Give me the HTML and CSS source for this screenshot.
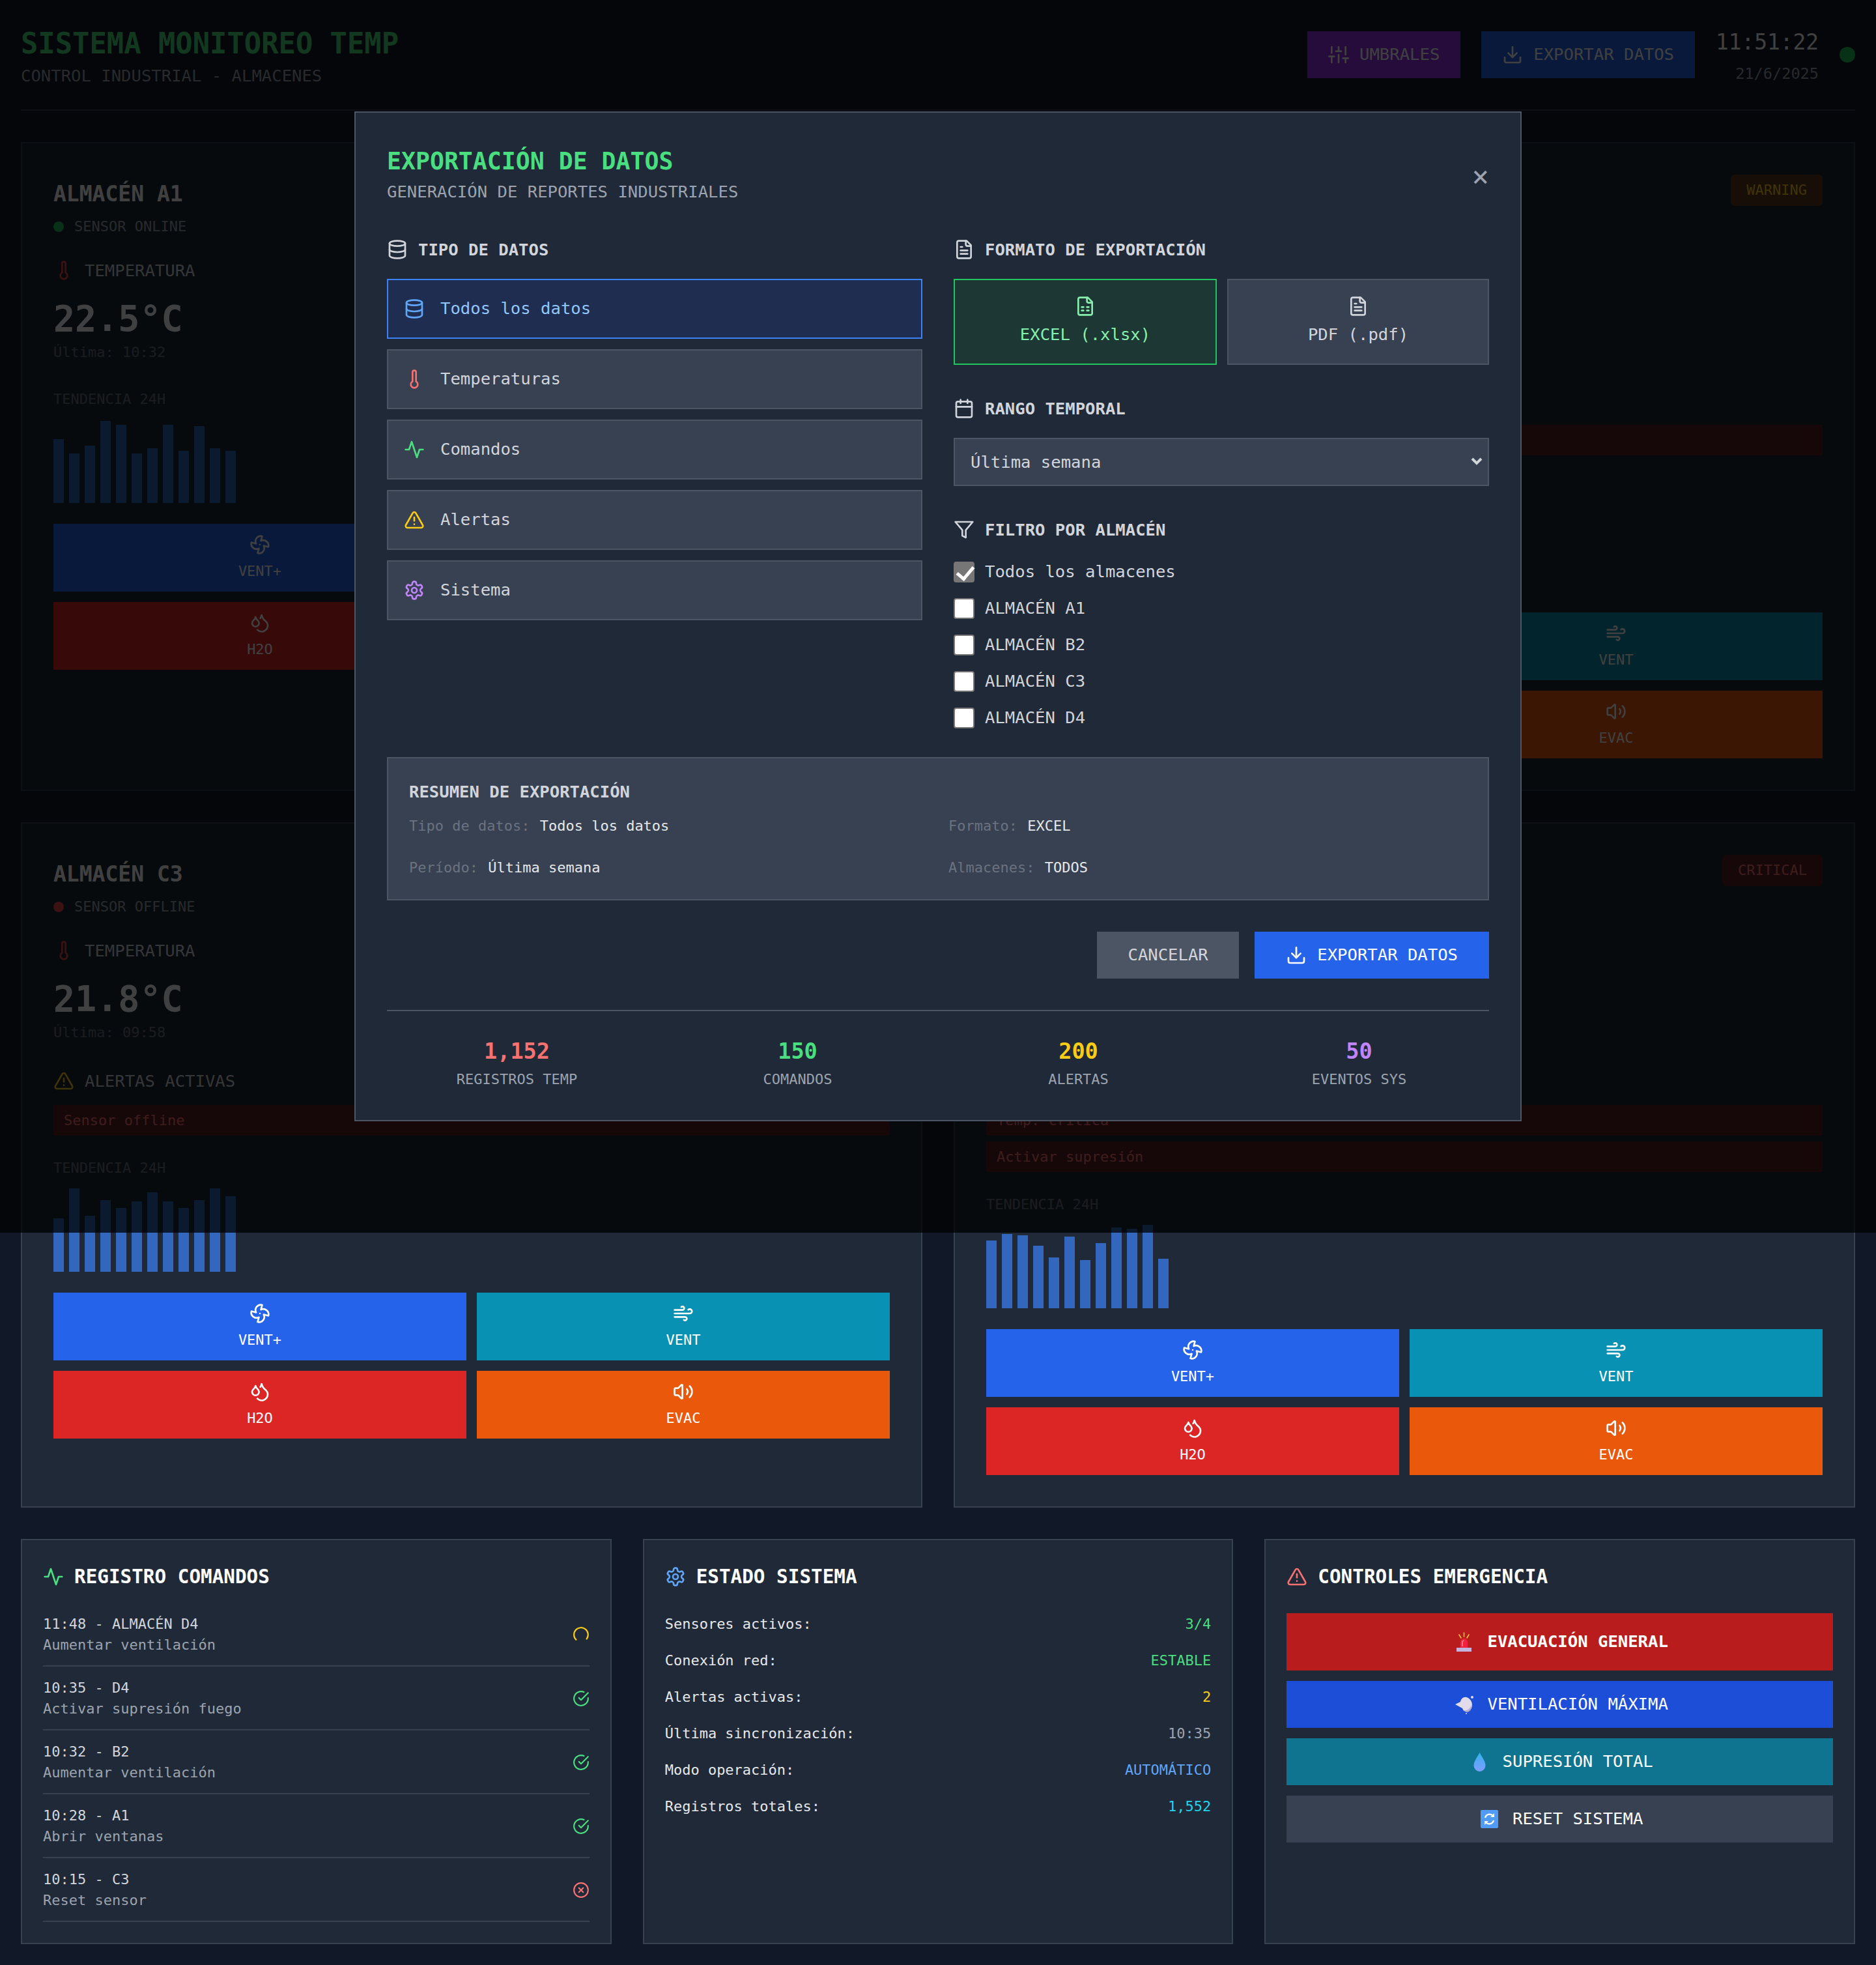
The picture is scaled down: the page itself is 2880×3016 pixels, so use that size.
FILE: index.html
```
<!DOCTYPE html>
<html lang="es">
<head>
    <meta charset="utf-8">
    <title>Sistema Monitoreo Temp</title>
    <link rel="stylesheet" href="styles.css">
</head>
<body>
    <svg class="sprite" width="0" height="0">
        <symbol id="i-db" viewBox="0 0 24 24"><ellipse cx="12" cy="5" rx="9" ry="3"/><path d="M3 5V19A9 3 0 0 0 21 19V5"/><path d="M3 12A9 3 0 0 0 21 12"/></symbol>
        <symbol id="i-temp" viewBox="0 0 24 24"><path d="M14 4v10.54a4 4 0 1 1-4 0V4a2 2 0 0 1 4 0Z"/></symbol>
        <symbol id="i-act" viewBox="0 0 24 24"><path d="M22 12h-4l-3 9L9 3l-3 9H2"/></symbol>
        <symbol id="i-warn" viewBox="0 0 24 24"><path d="m21.73 18-8-14a2 2 0 0 0-3.48 0l-8 14A2 2 0 0 0 4 21h16a2 2 0 0 0 1.73-3"/><path d="M12 9v4"/><path d="M12 17h.01"/></symbol>
        <symbol id="i-gear" viewBox="0 0 24 24"><path d="M12.22 2h-.44a2 2 0 0 0-2 2v.18a2 2 0 0 1-1 1.73l-.43.25a2 2 0 0 1-2 0l-.15-.08a2 2 0 0 0-2.73.73l-.22.38a2 2 0 0 0 .73 2.73l.15.1a2 2 0 0 1 1 1.72v.51a2 2 0 0 1-1 1.74l-.15.09a2 2 0 0 0-.73 2.73l.22.38a2 2 0 0 0 2.73.73l.15-.08a2 2 0 0 1 2 0l.43.25a2 2 0 0 1 1 1.73V20a2 2 0 0 0 2 2h.44a2 2 0 0 0 2-2v-.18a2 2 0 0 1 1-1.73l.43-.25a2 2 0 0 1 2 0l.15.08a2 2 0 0 0 2.73-.73l.22-.39a2 2 0 0 0-.73-2.73l-.15-.08a2 2 0 0 1-1-1.74v-.5a2 2 0 0 1 1-1.74l.15-.09a2 2 0 0 0 .73-2.73l-.22-.38a2 2 0 0 0-2.73-.73l-.15.08a2 2 0 0 1-2 0l-.43-.25a2 2 0 0 1-1-1.73V4a2 2 0 0 0-2-2z"/><circle cx="12" cy="12" r="3"/></symbol>
        <symbol id="i-file" viewBox="0 0 24 24"><path d="M15 2H6a2 2 0 0 0-2 2v16a2 2 0 0 0 2 2h12a2 2 0 0 0 2-2V7Z"/><path d="M14 2v4a2 2 0 0 0 2 2h4"/><path d="M10 9H8"/><path d="M16 13H8"/><path d="M16 17H8"/></symbol>
        <symbol id="i-sheet" viewBox="0 0 24 24"><path d="M15 2H6a2 2 0 0 0-2 2v16a2 2 0 0 0 2 2h12a2 2 0 0 0 2-2V7Z"/><path d="M14 2v4a2 2 0 0 0 2 2h4"/><path d="M8 13h2"/><path d="M14 13h2"/><path d="M8 17h2"/><path d="M14 17h2"/></symbol>
        <symbol id="i-cal" viewBox="0 0 24 24"><path d="M8 2v4"/><path d="M16 2v4"/><rect x="3" y="4" width="18" height="18" rx="2"/><path d="M3 10h18"/></symbol>
        <symbol id="i-filter" viewBox="0 0 24 24"><polygon points="22 3 2 3 10 12.46 10 19 14 21 14 12.46 22 3"/></symbol>
        <symbol id="i-down" viewBox="0 0 24 24"><path d="M21 15v4a2 2 0 0 1-2 2H5a2 2 0 0 1-2-2v-4"/><polyline points="7 10 12 15 17 10"/><line x1="12" y1="15" x2="12" y2="3"/></symbol>
        <symbol id="i-sliders" viewBox="0 0 24 24"><line x1="4" y1="21" x2="4" y2="14"/><line x1="4" y1="10" x2="4" y2="3"/><line x1="12" y1="21" x2="12" y2="12"/><line x1="12" y1="8" x2="12" y2="3"/><line x1="20" y1="21" x2="20" y2="16"/><line x1="20" y1="12" x2="20" y2="3"/><line x1="1" y1="14" x2="7" y2="14"/><line x1="9" y1="8" x2="15" y2="8"/><line x1="17" y1="16" x2="23" y2="16"/></symbol>
        <symbol id="i-fan" viewBox="0 0 24 24"><path d="M10.827 16.379a6.082 6.082 0 0 1-8.618-7.002l5.412 1.45a6.082 6.082 0 0 1 7.002-8.618l-1.45 5.412a6.082 6.082 0 0 1 8.618 7.002l-5.412-1.45a6.082 6.082 0 0 1-7.002 8.618l1.45-5.412Z"/><path d="M12 12v.01"/></symbol>
        <symbol id="i-wind" viewBox="0 0 24 24"><path d="M17.7 7.7a2.5 2.5 0 1 1 1.8 4.3H2"/><path d="M9.6 4.6A2 2 0 1 1 11 8H2"/><path d="M12.6 19.4A2 2 0 1 0 14 16H2"/></symbol>
        <symbol id="i-drops" viewBox="0 0 24 24"><path d="M7 16.3c2.2 0 4-1.83 4-4.05 0-1.16-.57-2.26-1.71-3.19S7.29 6.75 7 5.3c-.29 1.45-1.14 2.84-2.29 3.76S3 11.1 3 12.25c0 2.22 1.8 4.05 4 4.05z"/><path d="M12.56 6.6A10.97 10.97 0 0 0 14 3.02c.5 2.5 2 4.9 4 6.5s3 3.5 3 5.5a6.98 6.98 0 0 1-11.91 4.97"/></symbol>
        <symbol id="i-vol" viewBox="0 0 24 24"><path d="M11 4.702a.705.705 0 0 0-1.203-.498L6.413 7.587A1.4 1.4 0 0 1 5.416 8H3a1 1 0 0 0-1 1v6a1 1 0 0 0 1 1h2.416a1.4 1.4 0 0 1 .997.413l3.383 3.384A.705.705 0 0 0 11 19.298z"/><path d="M16 9a5 5 0 0 1 0 6"/><path d="M19.364 18.364a9 9 0 0 0 0-12.728"/></symbol>
        <symbol id="i-ok" viewBox="0 0 24 24"><path d="M22 11.08V12a10 10 0 1 1-5.93-9.14"/><polyline points="22 4 12 14.01 9 11.01"/></symbol>
        <symbol id="i-bad" viewBox="0 0 24 24"><circle cx="12" cy="12" r="10"/><line x1="15" y1="9" x2="9" y2="15"/><line x1="9" y1="9" x2="15" y2="15"/></symbol>
        <symbol id="i-load" viewBox="0 0 24 24"><path d="M5 19.2A10 10 0 1 1 20 18"/></symbol>
    </svg>

    <header class="top">
        <div>
            <h1 class="top-title">SISTEMA MONITOREO TEMP</h1>
            <p class="top-sub">CONTROL INDUSTRIAL - ALMACENES</p>
        </div>
        <div class="top-right">
            <button class="btn btn-purple"><svg class="icon"><use href="#i-sliders"/></svg>UMBRALES</button>
            <button class="btn btn-blue"><svg class="icon"><use href="#i-down"/></svg>EXPORTAR DATOS</button>
            <div class="clock">
                <div class="clock-time">11:51:22</div>
                <div class="clock-date">21/6/2025</div>
            </div>
            <span class="live-dot"></span>
        </div>
    </header>

    <main class="cards">
        <section class="card">
            <div class="card-head">
                <div>
                    <h2 class="card-title">ALMACÉN A1</h2>
                    <div class="sensor"><span class="dot dot-on"></span>SENSOR ONLINE</div>
                </div>
                <span class="badge badge-ok">NORMAL</span>
            </div>
            <div class="temp-label"><svg class="icon red-dark"><use href="#i-temp"/></svg>TEMPERATURA</div>
            <div class="temp-value">22.5°C</div>
            <div class="temp-time">Última: 10:32</div>
            <div class="trend">TENDENCIA 24H</div>
            <div class="bars">
                <span style="height:98px"></span><span style="height:76px"></span><span style="height:88px"></span><span style="height:126px"></span><span style="height:120px"></span><span style="height:76px"></span><span style="height:84px"></span><span style="height:120px"></span><span style="height:80px"></span><span style="height:118px"></span><span style="height:84px"></span><span style="height:80px"></span>
            </div>
            <div class="actions">
                <button class="act act-blue"><svg class="icon"><use href="#i-fan"/></svg>VENT+</button>
                <button class="act act-cyan"><svg class="icon"><use href="#i-wind"/></svg>VENT</button>
                <button class="act act-red"><svg class="icon"><use href="#i-drops"/></svg>H2O</button>
                <button class="act act-orange"><svg class="icon"><use href="#i-vol"/></svg>EVAC</button>
            </div>
        </section>

        <section class="card">
            <div class="card-head">
                <div>
                    <h2 class="card-title">ALMACÉN B2</h2>
                    <div class="sensor"><span class="dot dot-on"></span>SENSOR ONLINE</div>
                </div>
                <span class="badge badge-warn">WARNING</span>
            </div>
            <div class="temp-label"><svg class="icon red-dark"><use href="#i-temp"/></svg>TEMPERATURA</div>
            <div class="temp-value">26.3°C</div>
            <div class="temp-time">Última: 10:33</div>
            <div class="alerts">
                <div class="alerts-head"><svg class="icon yellow"><use href="#i-warn"/></svg>ALERTAS ACTIVAS</div>
                <div class="alert-row">Temp: elevada</div>
            </div>
            <div class="trend">TENDENCIA 24H</div>
            <div class="bars">
                <span style="height:90px"></span><span style="height:100px"></span><span style="height:86px"></span><span style="height:110px"></span><span style="height:96px"></span><span style="height:104px"></span><span style="height:84px"></span><span style="height:118px"></span><span style="height:92px"></span><span style="height:100px"></span><span style="height:80px"></span><span style="height:106px"></span>
            </div>
            <div class="actions">
                <button class="act act-blue"><svg class="icon"><use href="#i-fan"/></svg>VENT+</button>
                <button class="act act-cyan"><svg class="icon"><use href="#i-wind"/></svg>VENT</button>
                <button class="act act-red"><svg class="icon"><use href="#i-drops"/></svg>H2O</button>
                <button class="act act-orange"><svg class="icon"><use href="#i-vol"/></svg>EVAC</button>
            </div>
        </section>

        <section class="card">
            <div class="card-head">
                <div>
                    <h2 class="card-title">ALMACÉN C3</h2>
                    <div class="sensor"><span class="dot dot-off"></span>SENSOR OFFLINE</div>
                </div>
                <span class="badge badge-crit">OFFLINE</span>
            </div>
            <div class="temp-label"><svg class="icon red-dark"><use href="#i-temp"/></svg>TEMPERATURA</div>
            <div class="temp-value">21.8°C</div>
            <div class="temp-time">Última: 09:58</div>
            <div class="alerts">
                <div class="alerts-head"><svg class="icon yellow"><use href="#i-warn"/></svg>ALERTAS ACTIVAS</div>
                <div class="alert-row">Sensor offline</div>
            </div>
            <div class="trend">TENDENCIA 24H</div>
            <div class="bars">
                <span style="height:82px"></span><span style="height:128px"></span><span style="height:86px"></span><span style="height:110px"></span><span style="height:98px"></span><span style="height:108px"></span><span style="height:122px"></span><span style="height:108px"></span><span style="height:98px"></span><span style="height:110px"></span><span style="height:128px"></span><span style="height:116px"></span>
            </div>
            <div class="actions">
                <button class="act act-blue"><svg class="icon"><use href="#i-fan"/></svg>VENT+</button>
                <button class="act act-cyan"><svg class="icon"><use href="#i-wind"/></svg>VENT</button>
                <button class="act act-red"><svg class="icon"><use href="#i-drops"/></svg>H2O</button>
                <button class="act act-orange"><svg class="icon"><use href="#i-vol"/></svg>EVAC</button>
            </div>
        </section>

        <section class="card">
            <div class="card-head">
                <div>
                    <h2 class="card-title">ALMACÉN D4</h2>
                    <div class="sensor"><span class="dot dot-on"></span>SENSOR ONLINE</div>
                </div>
                <span class="badge badge-crit">CRITICAL</span>
            </div>
            <div class="temp-label"><svg class="icon red-dark"><use href="#i-temp"/></svg>TEMPERATURA</div>
            <div class="temp-value">31.2°C</div>
            <div class="temp-time">Última: 10:35</div>
            <div class="alerts">
                <div class="alerts-head"><svg class="icon yellow"><use href="#i-warn"/></svg>ALERTAS ACTIVAS</div>
                <div class="alert-row">Temp: crítica</div>
                <div class="alert-row">Activar supresión</div>
            </div>
            <div class="trend">TENDENCIA 24H</div>
            <div class="bars">
                <span style="height:104px"></span><span style="height:114px"></span><span style="height:112px"></span><span style="height:96px"></span><span style="height:78px"></span><span style="height:110px"></span><span style="height:74px"></span><span style="height:100px"></span><span style="height:124px"></span><span style="height:122px"></span><span style="height:128px"></span><span style="height:76px"></span>
            </div>
            <div class="actions">
                <button class="act act-blue"><svg class="icon"><use href="#i-fan"/></svg>VENT+</button>
                <button class="act act-cyan"><svg class="icon"><use href="#i-wind"/></svg>VENT</button>
                <button class="act act-red"><svg class="icon"><use href="#i-drops"/></svg>H2O</button>
                <button class="act act-orange"><svg class="icon"><use href="#i-vol"/></svg>EVAC</button>
            </div>
        </section>
    </main>

    <div class="panels">
        <section class="panel">
            <h3 class="panel-title"><svg class="icon green"><use href="#i-act"/></svg>REGISTRO COMANDOS</h3>
            <div class="log-row">
                <div><div class="log-time">11:48 - ALMACÉN D4</div><div class="log-text">Aumentar ventilación</div></div>
                <svg class="log-icon yellow"><use href="#i-load"/></svg>
            </div>
            <div class="log-row">
                <div><div class="log-time">10:35 - D4</div><div class="log-text">Activar supresión fuego</div></div>
                <svg class="log-icon green"><use href="#i-ok"/></svg>
            </div>
            <div class="log-row">
                <div><div class="log-time">10:32 - B2</div><div class="log-text">Aumentar ventilación</div></div>
                <svg class="log-icon green"><use href="#i-ok"/></svg>
            </div>
            <div class="log-row">
                <div><div class="log-time">10:28 - A1</div><div class="log-text">Abrir ventanas</div></div>
                <svg class="log-icon green"><use href="#i-ok"/></svg>
            </div>
            <div class="log-row">
                <div><div class="log-time">10:15 - C3</div><div class="log-text">Reset sensor</div></div>
                <svg class="log-icon red"><use href="#i-bad"/></svg>
            </div>
        </section>

        <section class="panel">
            <h3 class="panel-title panel-title-stats"><svg class="icon blue"><use href="#i-gear"/></svg>ESTADO SISTEMA</h3>
            <div class="stat-list">
                <div class="stat-row"><span>Sensores activos:</span><span class="green">3/4</span></div>
                <div class="stat-row"><span>Conexión red:</span><span class="green">ESTABLE</span></div>
                <div class="stat-row"><span>Alertas activas:</span><span class="yellow">2</span></div>
                <div class="stat-row"><span>Última sincronización:</span><span class="gray">10:35</span></div>
                <div class="stat-row"><span>Modo operación:</span><span class="blue">AUTOMÁTICO</span></div>
                <div class="stat-row"><span>Registros totales:</span><span class="cyan">1,552</span></div>
            </div>
        </section>

        <section class="panel">
            <h3 class="panel-title panel-title-gap"><svg class="icon red"><use href="#i-warn"/></svg>CONTROLES EMERGENCIA</h3>
            <div class="emerg-list">
                <button class="emerg emerg-red">
                    <svg class="emoji" viewBox="0 0 39 32">
                        <path d="M19.5 2v6M12 5l3 5M27 5l-3 5" stroke="#f5c242" stroke-width="1.6" stroke-linecap="round" fill="none"/>
                        <path d="M14 26V17a5.5 6 0 0 1 11 0v9z" fill="#f0213f"/>
                        <path d="M17 23v-6a2.5 3 0 0 1 2.5-3" stroke="#ff8a9a" stroke-width="1.5" fill="none"/>
                        <rect x="8" y="25" width="23" height="6" fill="#c4b3dc"/>
                    </svg>
                    <span>EVACUACIÓN GENERAL</span>
                </button>
                <button class="emerg emerg-blue">
                    <svg class="emoji" viewBox="0 0 39 32">
                        <path d="M6 16l8-4c1-5 5-8 9-7 5 1 9 6 9 12 0 6-4 10-8 10-4 0-6-2-7-5z" fill="#e2dbeb"/>
                        <path d="M20 25c5 1 10-3 11-9 1 7-3 12-7 12-2 0-3-1-4-3z" fill="#b7a9cf"/>
                        <circle cx="32" cy="5" r="2" fill="#e2dbeb"/>
                        <circle cx="23" cy="30" r="1" fill="#e2dbeb"/>
                    </svg>
                    <span>VENTILACIÓN MÁXIMA</span>
                </button>
                <button class="emerg emerg-teal">
                    <svg class="emoji" viewBox="0 0 39 32">
                        <defs><linearGradient id="gota" x1="0" y1="0" x2="0" y2="1"><stop offset="0" stop-color="#35b2ee"/><stop offset="1" stop-color="#7f9dff"/></linearGradient></defs>
                        <path d="M19.5 2c3 6 9 13 9 20a9 9 0 0 1-18 0c0-7 6-14 9-20z" fill="url(#gota)"/>
                    </svg>
                    <span>SUPRESIÓN TOTAL</span>
                </button>
                <button class="emerg emerg-gray">
                    <svg class="emoji" viewBox="0 0 39 32">
                        <rect x="6" y="2" width="27" height="28" rx="2" fill="#4f9bf5"/>
                        <path d="M13 14a7 7 0 0 1 12-3" stroke="#fff" stroke-width="2.4" fill="none"/>
                        <path d="M27 7v6h-6z" fill="#fff"/>
                        <path d="M26 18a7 7 0 0 1-12 3" stroke="#fff" stroke-width="2.4" fill="none"/>
                        <path d="M12 25v-6h6z" fill="#fff"/>
                    </svg>
                    <span>RESET SISTEMA</span>
                </button>
            </div>
        </section>
    </div>

    <div class="overlay">
        <div class="modal">
            <div class="modal-head">
                <div class="modal-heading">
                    <h2 class="modal-title">EXPORTACIÓN DE DATOS</h2>
                    <p class="modal-sub">GENERACIÓN DE REPORTES INDUSTRIALES</p>
                </div>
                <button class="close">×</button>
            </div>

            <div class="modal-grid">
                <div>
                    <h3 class="sec-title"><svg class="icon"><use href="#i-db"/></svg>TIPO DE DATOS</h3>
                    <div class="type-list">
                        <button class="tile tile-on"><svg class="icon blue"><use href="#i-db"/></svg>Todos los datos</button>
                        <button class="tile"><svg class="icon red"><use href="#i-temp"/></svg>Temperaturas</button>
                        <button class="tile"><svg class="icon green"><use href="#i-act"/></svg>Comandos</button>
                        <button class="tile"><svg class="icon yellow"><use href="#i-warn"/></svg>Alertas</button>
                        <button class="tile"><svg class="icon purple"><use href="#i-gear"/></svg>Sistema</button>
                    </div>
                </div>
                <div>
                    <h3 class="sec-title"><svg class="icon"><use href="#i-file"/></svg>FORMATO DE EXPORTACIÓN</h3>
                    <div class="format-grid">
                        <button class="fmt fmt-on"><svg class="icon"><use href="#i-sheet"/></svg>EXCEL (.xlsx)</button>
                        <button class="fmt"><svg class="icon"><use href="#i-file"/></svg>PDF (.pdf)</button>
                    </div>
                    <h3 class="sec-title sec-next"><svg class="icon"><use href="#i-cal"/></svg>RANGO TEMPORAL</h3>
                    <div class="range-box">
                        <select class="range">
                            <option>Última semana</option>
                            <option>Último mes</option>
                        </select>
                        <svg class="range-arrow" viewBox="0 0 20 14"><polyline points="3 3 10 10 17 3"/></svg>
                    </div>
                    <h3 class="sec-title sec-next"><svg class="icon"><use href="#i-filter"/></svg>FILTRO POR ALMACÉN</h3>
                    <div class="check-list">
                        <label class="check"><input type="checkbox" checked>Todos los almacenes</label>
                        <label class="check"><input type="checkbox">ALMACÉN A1</label>
                        <label class="check"><input type="checkbox">ALMACÉN B2</label>
                        <label class="check"><input type="checkbox">ALMACÉN C3</label>
                        <label class="check"><input type="checkbox">ALMACÉN D4</label>
                    </div>
                </div>
            </div>

            <div class="summary">
                <h4 class="summary-title">RESUMEN DE EXPORTACIÓN</h4>
                <div class="summary-grid">
                    <div><span class="muted">Tipo de datos:</span> Todos los datos</div>
                    <div><span class="muted">Formato:</span> EXCEL</div>
                    <div><span class="muted">Período:</span> Última semana</div>
                    <div><span class="muted">Almacenes:</span> TODOS</div>
                </div>
            </div>

            <div class="modal-actions">
                <button class="btn btn-cancel">CANCELAR</button>
                <button class="btn btn-export"><svg class="icon"><use href="#i-down"/></svg>EXPORTAR DATOS</button>
            </div>

            <div class="totals">
                <div><div class="total-num red">1,152</div><div class="total-label">REGISTROS TEMP</div></div>
                <div><div class="total-num green">150</div><div class="total-label">COMANDOS</div></div>
                <div><div class="total-num yellow">200</div><div class="total-label">ALERTAS</div></div>
                <div><div class="total-num purple">50</div><div class="total-label">EVENTOS SYS</div></div>
            </div>
        </div>
    </div>
</body>
</html>
```

FILE: styles.css
```
*{
    box-sizing: border-box;
}
body{
    margin: 0;
    padding: 32px;
    position: relative;
    background: #111827;
    color: #ffffff;
    font-family: "DejaVu Sans Mono", monospace;
    font-size: 25.6px;
    line-height: 40px;
}
h1, h2, h3, h4, p{
    margin: 0;
}
button{
    font: inherit;
    color: inherit;
    border: none;
    cursor: pointer;
}
.sprite{
    position: absolute;
}
.icon{
    width: 32px;
    height: 32px;
    flex: none;
}
.icon, .log-icon{
    fill: none;
    stroke: currentColor;
    stroke-width: 2;
    stroke-linecap: round;
    stroke-linejoin: round;
}
.red{ color: #f87171; }
.red-dark{ color: #ef4444; }
.green{ color: #4ade80; }
.yellow{ color: #facc15; }
.blue{ color: #60a5fa; }
.purple{ color: #c084fc; }
.cyan{ color: #22d3ee; }
.gray{ color: #9ca3af; }

/* cabecera */
.top{
    display: flex;
    justify-content: space-between;
    align-items: center;
    padding-bottom: 32px;
    border-bottom: 2px solid #374151;
    margin-bottom: 48px;
}
.top-title{
    padding-top: 3px;
    font-size: 43.8px;
    line-height: 64px;
    color: #4ade80;
}
.top-sub{
    margin-top: -3px;
    color: #9ca3af;
}
.top-right{
    display: flex;
    align-items: center;
    gap: 32px;
}
.btn{
    display: flex;
    align-items: center;
    gap: 16px;
    height: 72px;
    padding: 0 32px 2px;
    color: #ffffff;
}
.btn .icon{
    margin-top: 2px;
}
.btn-purple{ background: #9333ea; }
.btn-blue{ background: #2563eb; }
.clock{
    text-align: right;
    padding-bottom: 8px;
}
.clock-time{
    font-size: 32.8px;
    line-height: 66px;
    color: #ffffff;
}
.clock-date{
    font-size: 23.6px;
    line-height: 30px;
    color: #9ca3af;
}
.live-dot{
    width: 24px;
    height: 24px;
    border-radius: 50%;
    background: #22c55e;
}

/* tarjetas de almacen */
.cards{
    display: grid;
    grid-template-columns: 1fr 1fr;
    gap: 48px;
}
.card{
    background: #1f2937;
    border: 2px solid #374151;
    padding: 48px;
}
.card-head{
    display: flex;
    justify-content: space-between;
    align-items: flex-start;
}
.card-title{
    font-size: 33px;
    line-height: 60px;
}
.sensor{
    display: flex;
    align-items: center;
    gap: 16px;
    margin-top: 3px;
    font-size: 22px;
    line-height: 34px;
    color: #9ca3af;
}
.dot{
    width: 16px;
    height: 16px;
    border-radius: 50%;
}
.dot-on{ background: #22c55e; }
.dot-off{ background: #ef4444; }
.badge{
    padding: 8px 24px;
    border-radius: 6px;
    font-size: 22px;
    line-height: 32px;
}
.badge-ok{ background: rgba(20, 83, 45, 0.6); color: #4ade80; }
.badge-warn{ background: rgba(113, 63, 18, 0.7); color: #facc15; }
.badge-crit{ background: rgba(127, 29, 29, 0.6); color: #f87171; }
.temp-label{
    display: flex;
    align-items: center;
    gap: 16px;
    margin-top: 30px;
    color: #d1d5db;
}
.temp-value{
    margin-top: 22px;
    font-size: 55px;
    font-weight: bold;
    line-height: 64px;
}
.temp-time{
    margin-top: 5px;
    font-size: 22px;
    line-height: 30px;
    color: #6b7280;
}
.alerts{
    margin-top: 39px;
}
.alerts-head{
    display: flex;
    align-items: center;
    gap: 16px;
    margin-bottom: 17px;
    color: #d1d5db;
}
.alert-row{
    height: 47px;
    margin-bottom: 9px;
    padding: 8px 16px;
    background: rgba(127, 29, 29, 0.6);
    font-size: 22px;
    line-height: 31px;
    color: #f87171;
}
.alert-row:last-child{
    margin-bottom: 0;
}
.trend{
    margin-top: 43px;
    margin-bottom: 17px;
    font-size: 22px;
    line-height: 28px;
    color: #6b7280;
}
.alerts + .trend{
    margin-top: 36px;
}
.bars{
    display: flex;
    align-items: flex-end;
    gap: 8px;
    height: 128px;
}
.bars span{
    width: 16px;
    background: #3b82f6;
    opacity: 0.7;
}
.actions{
    display: grid;
    grid-template-columns: 1fr 1fr;
    gap: 16px;
    margin-top: 32px;
}
.act{
    display: flex;
    flex-direction: column;
    align-items: center;
    gap: 9px;
    height: 104px;
    padding: 16px;
    font-size: 22px;
    line-height: 32px;
    color: #ffffff;
}
.act-blue{ background: #2563eb; }
.act-cyan{ background: #0891b2; }
.act-red{ background: #dc2626; }
.act-orange{ background: #ea580c; }

/* paneles inferiores */
.panels{
    display: grid;
    grid-template-columns: repeat(3, 1fr);
    gap: 48px;
    margin-top: 48px;
}
.panel{
    height: 622px;
    background: #1f2937;
    border: 2px solid #374151;
    padding: 32px;
}
.panel-title{
    display: flex;
    align-items: center;
    gap: 16px;
    margin-bottom: 16px;
    font-size: 29.3px;
    line-height: 48px;
}
.panel-title-stats{
    margin-bottom: 33px;
}
.panel-title-gap{
    margin-bottom: 32px;
}
.log-row{
    display: flex;
    justify-content: space-between;
    align-items: center;
    padding: 17px 0 15px;
    border-bottom: 2px solid #374151;
    font-size: 22px;
    line-height: 32px;
}
.log-time{
    color: #d1d5db;
}
.log-text{
    color: #9ca3af;
}
.log-icon{
    width: 26px;
    height: 26px;
    flex: none;
}
.stat-list{
    display: flex;
    flex-direction: column;
    gap: 24px;
}
.stat-row{
    display: flex;
    justify-content: space-between;
    font-size: 22px;
    line-height: 32px;
    color: #e5e7eb;
}
.stat-row .green{ color: #4ade80; }
.stat-row .yellow{ color: #facc15; }
.stat-row .gray{ color: #9ca3af; }
.stat-row .blue{ color: #60a5fa; }
.stat-row .cyan{ color: #22d3ee; }
.emerg-list{
    display: flex;
    flex-direction: column;
    gap: 16px;
}
.emerg{
    display: flex;
    justify-content: center;
    align-items: center;
    gap: 16px;
    height: 72px;
    color: #ffffff;
}
.emerg span{
    margin-bottom: 2px;
}
.emoji{
    width: 39px;
    height: 32px;
    flex: none;
}
.emerg-red{
    height: 88px;
    background: #b91c1c;
    font-weight: bold;
}
.emerg-blue{ background: #1d4ed8; }
.emerg-teal{ background: #0e7490; }
.emerg-gray{ background: #374151; }

/* ventana de exportacion */
.overlay{
    position: absolute;
    top: 0;
    left: 0;
    right: 0;
    height: 1892px;
    display: flex;
    justify-content: center;
    align-items: center;
    background: rgba(0, 0, 0, 0.75);
}
.modal{
    width: 1792px;
    padding: 48px;
    background: #1f2937;
    border: 2px solid #4b5563;
}
.modal-head{
    display: flex;
    justify-content: space-between;
    align-items: center;
    margin-bottom: 48px;
}
.modal-heading{
    padding-bottom: 4px;
}
.modal-title{
    font-size: 36.5px;
    line-height: 54px;
    color: #4ade80;
}
.modal-sub{
    margin-top: 1px;
    line-height: 36px;
    color: #9ca3af;
}
.close{
    margin-top: 4px;
    padding: 0;
    background: none;
    font-size: 44px;
    line-height: 40px;
    color: #9ca3af;
}
.modal-grid{
    display: grid;
    grid-template-columns: 1fr 1fr;
    gap: 48px;
}
.sec-title{
    display: flex;
    align-items: center;
    gap: 16px;
    margin-bottom: 24px;
    padding-bottom: 2px;
    font-size: 25.6px;
    line-height: 38px;
    color: #d1d5db;
}
.sec-next{
    margin-top: 48px;
}
.type-list{
    display: flex;
    flex-direction: column;
    gap: 16px;
}
.tile{
    display: flex;
    align-items: center;
    gap: 24px;
    padding: 24px 24px 26px;
    background: #374151;
    border: 2px solid #4b5563;
    color: #d1d5db;
    line-height: 38px;
    text-align: left;
}
.tile .icon{
    margin-top: 2px;
}
.tile-on{
    background: #1f2e50;
    border-color: #3b82f6;
    color: #93c5fd;
}
.format-grid{
    display: grid;
    grid-template-columns: 404px 1fr;
    gap: 16px;
}
.fmt{
    display: flex;
    flex-direction: column;
    align-items: center;
    gap: 8px;
    padding: 24px 24px 26px;
    background: #374151;
    border: 2px solid #4b5563;
    color: #d1d5db;
    line-height: 38px;
}
.fmt-on{
    background: #1d3734;
    border-color: #22c55e;
    color: #86efac;
}
.range-box{
    position: relative;
}
.range{
    display: block;
    width: 100%;
    height: 74px;
    padding: 0 48px 0 24px;
    background: #374151;
    border: 2px solid #4b5563;
    border-radius: 0;
    color: #d1d5db;
    font: inherit;
    appearance: none;
}
.range-arrow{
    position: absolute;
    right: 9px;
    top: 29px;
    width: 20px;
    height: 14px;
    fill: none;
    stroke: #d1d5db;
    stroke-width: 4;
}
.check-list{
    display: flex;
    flex-direction: column;
    gap: 16px;
}
.check{
    display: flex;
    align-items: center;
    gap: 16px;
    padding-bottom: 2px;
    color: #d1d5db;
    line-height: 38px;
}
.check input{
    width: 32px;
    height: 32px;
    margin: 2px 0 0;
    appearance: none;
    background: #ffffff;
    border: 2px solid #767676;
    border-radius: 4px;
}
.check input:checked{
    background: #767676;
}
.check input:checked::after{
    content: "";
    display: block;
    width: 11px;
    height: 21px;
    margin: 0 0 0 8px;
    border-right: 5px solid #ffffff;
    border-bottom: 5px solid #ffffff;
    transform: rotate(40deg);
}
.summary{
    margin-top: 40px;
    padding: 32px;
    background: #374151;
    border: 2px solid #4b5563;
}
.summary-title{
    margin-bottom: 18px;
    font-size: 25.6px;
    line-height: 38px;
    color: #d1d5db;
}
.summary-grid{
    display: grid;
    grid-template-columns: 1fr 1fr;
    gap: 32px;
    font-size: 22px;
    line-height: 32px;
    color: #e5e7eb;
}
.muted{
    margin-right: 2px;
    color: #6b7280;
}
.modal-actions{
    display: flex;
    justify-content: flex-end;
    gap: 24px;
    margin-top: 48px;
}
.btn-cancel{
    padding: 0 47.5px 2px;
    background: #4b5563;
    color: #d1d5db;
}
.btn-export{
    padding: 0 48px 2px;
    background: #2563eb;
}
.totals{
    display: grid;
    grid-template-columns: repeat(4, 1fr);
    gap: 32px;
    margin-top: 48px;
    padding-top: 42px;
    border-top: 2px solid #4b5563;
    text-align: center;
}
.total-num{
    font-size: 33.6px;
    font-weight: bold;
    line-height: 40px;
}
.total-label{
    margin-top: 9px;
    font-size: 22px;
    line-height: 28px;
    color: #9ca3af;
}
```
